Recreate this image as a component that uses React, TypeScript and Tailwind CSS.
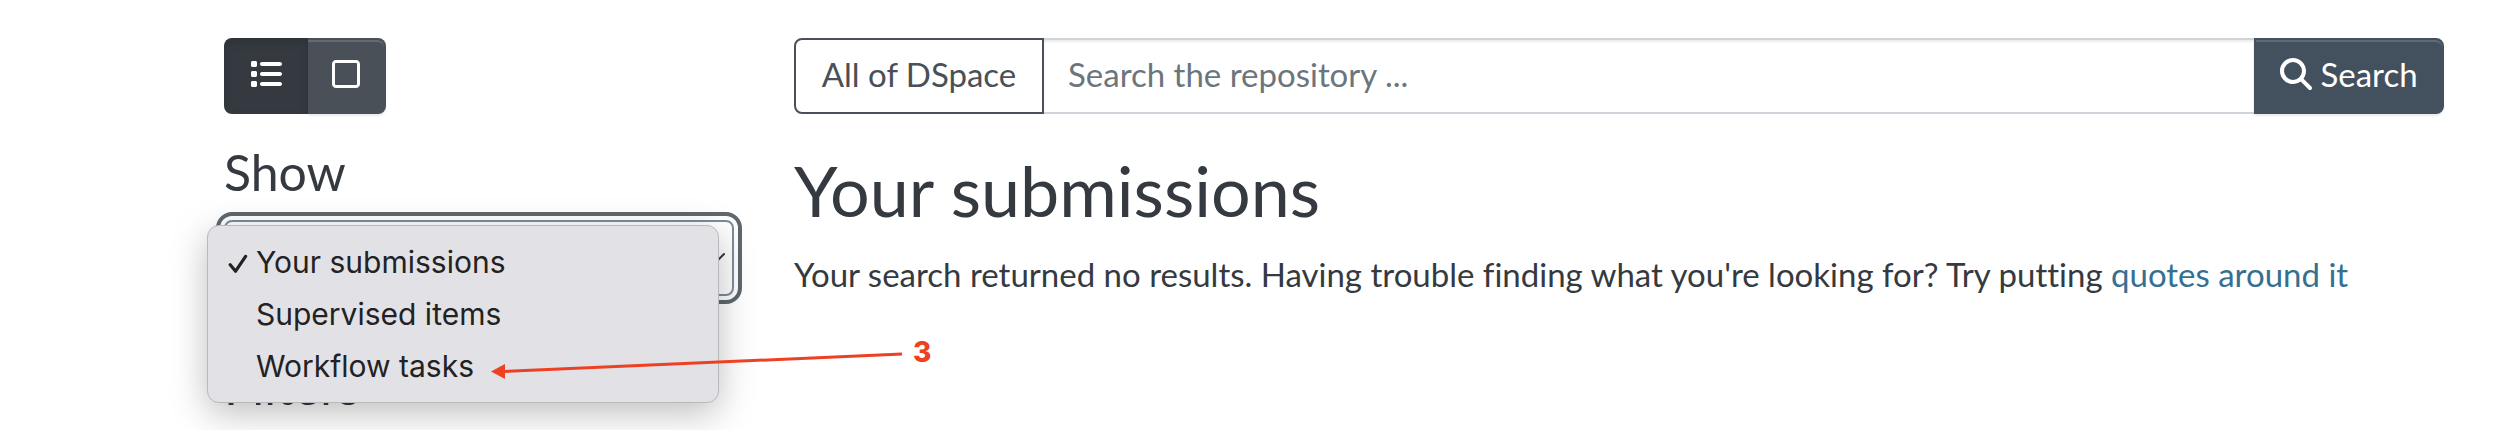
import React from "react";
import { FaList, FaMagnifyingGlass, FaRegSquare } from "react-icons/fa6";

const views = ["Your submissions", "Supervised items", "Workflow tasks"];

function ViewSwitch() {
  return (
    <div className="flex h-[76px] w-fit" role="group" aria-label="Layout">
      <button
        type="button"
        aria-label="List"
        aria-pressed="true"
        className="flex w-[84px] items-center justify-center rounded-l-lg bg-[#343a40] pb-1 text-[32px] text-white shadow-[inset_0_4px_10px_rgba(0,0,0,0.14)]"
      >
        <FaList />
      </button>
      <button
        type="button"
        aria-label="Grid"
        aria-pressed="false"
        className="flex w-[78px] items-center justify-center rounded-r-lg border-2 border-l-0 border-[#495057] bg-[#495057] pb-1 text-[32px] text-white shadow-[inset_0_2px_0_rgba(255,255,255,0.15),0_2px_2px_rgba(0,0,0,0.08)]"
      >
        <FaRegSquare />
      </button>
    </div>
  );
}

function ViewMenu() {
  return (
    <ul
      role="listbox"
      aria-label="Show"
      className="absolute top-[5px] -left-[17px] z-10 flex w-[512px] flex-col rounded-xl border border-[#b9b8bb] bg-[#e2e1e6] py-[10px] font-['Inter',sans-serif] text-[30px] leading-[52px] text-[#222222] shadow-[0_10px_36px_rgba(0,0,0,0.26)]"
    >
      {views.map((view, i) => (
        <li key={view} role="option" aria-selected={i === 0} className="flex items-center">
          <span className="flex w-12 justify-end pr-2">
            {i === 0 && (
              <svg viewBox="0 0 20 20" className="mt-1 size-5" fill="none" stroke="currentColor" strokeWidth="3.2" strokeLinecap="round" strokeLinejoin="round" aria-hidden="true">
                <path d="M2.2 10.8 7.6 17.2 17.6 2.4" />
              </svg>
            )}
          </span>
          {view}
        </li>
      ))}
    </ul>
  );
}

function Sidebar() {
  return (
    <aside className="col-span-3 flex flex-col">
      <ViewSwitch />
      <label htmlFor="view" className="mt-[29px] mb-[19px] text-[50px] leading-[58px]">
        Show
      </label>
      <div className="relative">
        <select
          id="view"
          defaultValue={views[0]}
          className="block h-[76px] w-full appearance-none rounded-lg border-2 border-[#7c8c9f] bg-white px-6 text-[33px] outline-4 outline-offset-4 outline-[#5f686f]"
        >
          {views.map((view) => (
            <option key={view}>{view}</option>
          ))}
        </select>
        <svg viewBox="0 0 24 14" className="pointer-events-none absolute top-8 right-2 h-[14px] w-6" fill="none" stroke="#343a40" strokeWidth="2" strokeLinecap="round" aria-hidden="true">
          <path d="M2 2 12 12 22 2" />
        </svg>
        <ViewMenu />
      </div>
      <h2 className="mt-[61px] text-[50px] leading-[58px]">Filters</h2>
    </aside>
  );
}

function SearchForm() {
  return (
    <form className="flex h-[76px] text-[33px] leading-10" onSubmit={(e) => e.preventDefault()}>
      <button type="button" className="flex w-[250px] shrink-0 items-center justify-center rounded-l-lg border-2 border-[#495057] pb-1 text-[#495057]">
        All of DSpace
      </button>
      <input
        type="text"
        aria-label="Search the repository"
        placeholder="Search the repository ..."
        className="min-w-0 flex-1 border-y-2 border-[#ced4da] bg-white px-6 pb-1 shadow-[inset_0_2px_2px_rgba(0,0,0,0.08)] placeholder:text-[#6c757d]"
      />
      <button
        type="submit"
        className="flex w-[190px] shrink-0 items-center justify-center gap-2 rounded-r-lg border-2 border-[#43515f] bg-[#43515f] pb-1 text-white shadow-[inset_0_2px_0_rgba(255,255,255,0.15),0_2px_2px_rgba(0,0,0,0.08)]"
      >
        <FaMagnifyingGlass className="size-8" />
        Search
      </button>
    </form>
  );
}

function Callout() {
  return (
    <div className="pointer-events-none absolute top-[338px] left-[491px] z-20 flex text-[#ee4023]" aria-hidden="true">
      <svg viewBox="0 0 412 44" className="h-11 w-[412px]" fill="currentColor">
        <path d="M13 33.5 411 16" stroke="currentColor" strokeWidth="3" />
        <path d="M0 33.5 14 26V41Z" />
      </svg>
      <span className="pl-[10px] font-['Inter',sans-serif] text-[28px] leading-7 font-extrabold">3</span>
    </div>
  );
}

export default function App() {
  return (
    <div className="relative min-h-screen overflow-hidden bg-white font-['Lato',sans-serif] text-[#343a40] [font-variant-ligatures:none]">
      <div className="grid grid-cols-12 gap-x-[60px] pt-[38px] pr-16 pl-56">
        <Sidebar />
        <main className="col-span-9">
          <SearchForm />
          <h1 className="mt-[34px] text-[70px] leading-[84px]">Your submissions</h1>
          <p className="mt-[17px] text-[33px] leading-[50px]">
            Your search returned no results. Having trouble finding what you're looking for? Try putting{" "}
            <a href="#quotes" className="text-[#366f90]">quotes around it</a>
          </p>
        </main>
      </div>
      <Callout />
    </div>
  );
}
